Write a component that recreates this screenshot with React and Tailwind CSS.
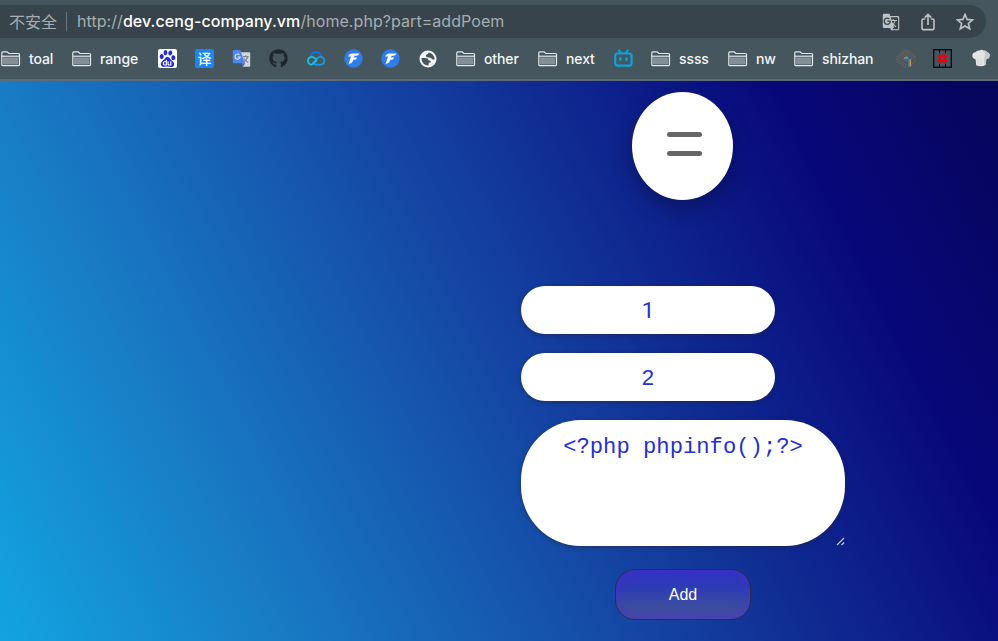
import { FaGithub } from "react-icons/fa";
import { SiBaidu } from "react-icons/si";
import { MdGTranslate } from "react-icons/md";

function Folder() {
  return (
    <svg className="h-[16px] w-[20px] shrink-0" viewBox="0 0 20 16" fill="none" stroke="#e4e7e9" strokeWidth="1.2">
      <path d="M.8 13.6V1.9Q.8.9 1.8.9H6.2l1.6 1.6H17.5q1 0 1 1V13.6q0 1-1 1H1.8q-1 0-1-1Z" />
      <path d="M.8 5.2H18.5" />
      <path d="M2 6.4H17.3V13.4H2Z" fill="#849096" stroke="none" />
    </svg>
  );
}

function Baidu() {
  return (
    <span className="flex h-[19px] w-[19px] items-center justify-center rounded-[2px] bg-white">
      <SiBaidu className="h-[17px] w-[17px] text-[#2529d8]" />
    </span>
  );
}

function Yi() {
  return (
    <span className="flex h-[19px] w-[19px] items-center justify-center rounded-[2px] bg-[#1687f5] font-['Noto_Sans_CJK_SC',sans-serif] text-[14px] leading-[19px] font-medium text-white">
      译
    </span>
  );
}

function GoogleTranslate() {
  return (
    <svg className="h-[19px] w-[19px]" viewBox="0 0 19 19">
      <path d="M8 3.2h9.2q1 0 1 1v12.6q0 1-1 1H11Z" fill="#d3d7da" />
      <path d="M11 7.6h5.6M13.8 6.2v1.4M15.7 7.7Q14.8 11.6 11.4 13M12 9.5q1.5 2.7 4.2 4" fill="none" stroke="#7b8990" strokeWidth="1.1" />
      <path d="M10 14.2h3.2L11 17.8Z" fill="#3563c8" />
      <path d="M1.8 1H8.2L13 14.2H1.8q-1 0-1-1V2q0-1 1-1Z" fill="#4b86ef" />
      <path d="M7.4 5.7A2.6 2.6 0 1 0 8.2 8H5.7" fill="none" stroke="#e6eefb" strokeWidth="1.1" />
    </svg>
  );
}

function Cloud() {
  return (
    <svg className="h-[19px] w-[20px]" viewBox="0 0 20 19" fill="none" strokeWidth="1.8" strokeLinecap="round">
      <path d="M5 7.4a5.1 5.1 0 0 1 10-.2" stroke="#1272ee" />
      <path d="M8.8 15.6h5.9a3.9 3.9 0 1 0-2.4-7.1L6.9 14.2" stroke="#149be9" />
      <path d="M9.6 9.8 7.6 8.3A3.9 3.9 0 1 0 5.2 15.6Q6.6 15.5 7.8 14.4L10.5 11.7" stroke="#13c7d2" />
    </svg>
  );
}

function FMark() {
  return (
    <svg className="h-[19px] w-[19px]" viewBox="0 0 19 19">
      <circle cx="9.5" cy="9.5" r="9.2" fill="#2f7de9" />
      <path d="M4.2 7.4Q5.2 4.4 8.4 4.4H15.4Q14.8 6.6 12.4 6.7H10.6L10 8.5h3.2Q12.6 10.7 10.4 10.8H9.2Q8.4 14.8 4.6 14.8L7 7.4Z" fill="#fff" />
    </svg>
  );
}

function Globe() {
  return (
    <svg className="h-[18px] w-[18px]" viewBox="0 0 18 18">
      <circle cx="9" cy="9" r="7.5" fill="#46565f" stroke="#f4f5f6" strokeWidth="2" />
      <path d="M2 4.5 8.2 1.2 9.6 2.8Q9.4 4.2 7.6 4.4 6.2 5.4 7.2 6.7 8.4 7.8 10 7.4q2.4.2 3 1.6.9.9 3.2.6L15.6 12 10 16.4 9.4 15.8 9.8 12.8 12 12.2Q11.8 10.2 9.4 10.3 9 8.2 6.8 8.1L2 8Z" fill="#f4f5f6" />
    </svg>
  );
}

function Tv() {
  return (
    <svg className="h-[19px] w-[20px]" viewBox="0 0 20 19" fill="none" stroke="#0fa2d9" strokeWidth="2.2" strokeLinecap="round">
      <rect x="1.2" y="4.5" width="16.4" height="12.2" rx="2.6" />
      <path d="M5 1.4 7 4M13.8 1.4 11.8 4M6.3 9.4v1.6M12.5 9.4v1.6" />
      <path d="M4.4 17.4h1M13.6 17.4h1" strokeWidth="1.3" />
    </svg>
  );
}

function Cube() {
  return (
    <svg className="h-[20px] w-[20px]" viewBox="0 0 20 20" fill="none">
      <path d="M1 7 10 1l9 6-8 5.5ZM1 9.5 10.5 16M1 12l9 6.5M3.5 7.3 10 3l6 4.3M6 8l4-2.6L14.5 8" stroke="#6c635d" strokeWidth=".9" />
      <path d="M1 7v5.5M12 18.5l7-5.8V7" stroke="#68615e" strokeWidth=".9" />
      <path d="M8.2 9.8Q9.3 7.6 12.2 8.5" stroke="#d28a47" strokeWidth="1.3" />
      <path d="M9.2 10.2q2-1.4 3.2.3" stroke="#208ec8" strokeWidth="1.8" />
      <path d="M12.7 11v6.8" stroke="#2789b8" strokeWidth="1.2" />
      <path d="M14.3 10.2v7.3" stroke="#df892f" strokeWidth="1.7" />
    </svg>
  );
}

function Grate() {
  return (
    <svg className="h-[19px] w-[19px]" viewBox="0 0 19 19" fill="none">
      <rect x=".7" y=".7" width="17.6" height="17.6" stroke="#080c0e" strokeWidth="1.4" />
      <path d="M6.5 1v17M12.5 1v17" stroke="#080c0e" strokeWidth="1" />
      <path d="M7 4v11M12 4v11M4 7h11M4 12h11" stroke="#e3060f" strokeWidth="2" />
    </svg>
  );
}

function ChefHat() {
  return (
    <svg className="h-[19px] w-[18px]" viewBox="0 0 18 19">
      <path d="M3.6 10.4Q.2 9.6.3 6.6.4 3.6 3.4 3.2 5 .9 7.6 1.5 9.6.2 11.6 1.5 14.2 1 15.2 3.2 17.9 4 17.7 6.8 17.4 9.8 14.3 10.3L13.8 15.8Q9 18.6 4.2 16.2Z" fill="#e3e3e3" />
      <path d="M12.4 2.2q1.4 4-.2 7.4l.2 7 1.4-.8.5-5.5q3.1-.5 3.4-3.5.2-2.8-2.5-3.6Q14.4 1.6 12.4 1.5Z" fill="#c6c7c8" />
      <path d="M6 9.5v6M9 10v6" stroke="#cfd0d0" strokeWidth=".8" />
    </svg>
  );
}

const bookmarks = [
  { label: "toal", cell: "w-[71px]" },
  { label: "range", cell: "w-[86px]" },
  { icon: <Baidu />, cell: "w-[37px]" },
  { icon: <Yi />, cell: "w-[37px]" },
  { icon: <GoogleTranslate />, cell: "w-[37px]" },
  { icon: <FaGithub className="h-[19px] w-[19px] text-[#20272c]" />, cell: "w-[37px]" },
  { icon: <Cloud />, cell: "w-[38px]" },
  { icon: <FMark />, cell: "w-[37px]" },
  { icon: <FMark />, cell: "w-[38px]" },
  { icon: <Globe />, cell: "w-[37px]" },
  { label: "other", cell: "w-[82px]" },
  { label: "next", cell: "w-[76px]" },
  { icon: <Tv />, cell: "w-[37px]" },
  { label: "ssss", cell: "w-[77px]" },
  { label: "nw", cell: "w-[66px]" },
  { label: "shizhan", cell: "w-[102px]" },
  { icon: <Cube />, cell: "w-[37px]" },
  { icon: <Grate />, cell: "w-[39px]" },
  { icon: <ChefHat />, cell: "w-[18px]" },
];

function AddressBar() {
  return (
    <div className="flex h-[33px] w-[986px] items-center rounded-r-full bg-[#38444b] pl-[9px] text-[#a6adb1]">
      <span className="w-[57px] pb-[2px] font-['Noto_Sans_CJK_SC',sans-serif] text-[16px] leading-[30px] whitespace-nowrap">不安全</span>
      <span className="h-[19px] w-px bg-[#69757b]" />
      <span className="ml-[10px] pb-[2px] text-[16px] leading-[30px] tracking-[0.06px] whitespace-nowrap">
        http://<span className="font-medium text-white">dev.ceng-company.vm</span>/home.php?part=addPoem
      </span>
      <div className="mr-[12px] ml-auto flex items-center text-[#bdc2c5]">
        <MdGTranslate className="h-[18px] w-[18px]" />
        <svg className="ml-[21px] h-[18px] w-[14px]" viewBox="0 0 14 18" fill="none" stroke="currentColor" strokeWidth="1.6">
          <path d="M4.2 6H2.4Q1 6 1 7.4v7.8q0 1.4 1.4 1.4h9.2q1.4 0 1.4-1.4V7.4Q13 6 11.6 6H9.8M7 12V1.6M3.7 4.6 7 1.3l3.3 3.3" />
        </svg>
        <svg className="ml-[21px] h-[18px] w-[18px]" viewBox="0 0 18 18" fill="none" stroke="currentColor" strokeWidth="1.6">
          <path d="M9 1.4l2.1 5 5.4.5-4.1 3.6 1.3 5.3L9 13 4.3 15.8l1.3-5.3L1.5 6.9l5.4-.5Z" />
        </svg>
      </div>
    </div>
  );
}

export default function App() {
  return (
    <div className="flex h-[641px] w-[998px] flex-col overflow-hidden bg-[#46565f] font-['Inter','Liberation_Sans',sans-serif]">
      <header className="h-[81px] shrink-0 border-b-2 border-[#5c6b76] pt-[5px]">
        <AddressBar />
        <nav className="flex h-[41px] items-center pl-px">
          {bookmarks.map((item, i) => (
            <div key={i} className={`flex shrink-0 items-center ${item.cell}`}>
              {item.icon || (
                <>
                  <Folder />
                  <span className="ml-[8px] text-[14px] leading-[20px] font-medium tracking-[-0.1px] whitespace-nowrap text-[#f3f5f6]">{item.label}</span>
                </>
              )}
            </div>
          ))}
        </nav>
      </header>
      <main className="flex-1 bg-[linear-gradient(63.2deg,#12a4e1_0%,#187cc5_21.9%,#1442a2_52%,#08077a_82.5%,#050559_100%)] pt-[11px] pl-[521px]">
        <div className="ml-[111px] flex h-[108px] w-[101px] flex-col items-center gap-[14.5px] rounded-[50%] bg-white pt-[39.7px] pl-[3px] shadow-[0_8px_20px_rgba(0,0,0,0.28)]">
          <span className="h-[5px] w-[35px] rounded-full bg-[#666]" />
          <span className="h-[5px] w-[35px] rounded-full bg-[#666]" />
        </div>
        <form className="mt-[86px] flex flex-col font-['Liberation_Sans',sans-serif] text-[22.2px] text-[#2430cf]">
          <div className="flex h-[48.4px] w-[254px] items-center justify-center rounded-[25px] bg-white pt-px font-['Roboto',sans-serif] text-[22.5px] shadow-[0_1px_4px_rgba(35,35,50,0.6)]">1</div>
          <div className="mt-[18.6px] flex h-[48.4px] w-[254px] items-center justify-center rounded-[25px] bg-white shadow-[0_1px_4px_rgba(35,35,50,0.6)]">2</div>
          <div className="relative mt-[18.6px] h-[126.3px] w-[324px] rounded-[60px] bg-white pt-[15px] text-center font-['Liberation_Mono',monospace] leading-[26px] whitespace-nowrap shadow-[0_1px_4px_rgba(35,35,50,0.6)]">
            {"<?php phpinfo();?>"}
            <svg className="absolute right-0 bottom-0 h-[10px] w-[10px]" viewBox="0 0 10 10" fill="none">
              <path d="M1 8 8 1M5.5 8.2 8 5.7" stroke="#202020" strokeWidth="1" />
              <path d="M2 9 9 2M6.5 9 9 6.5" stroke="#c9cbd2" strokeWidth="1.2" />
            </svg>
          </div>
          <button type="button" className="mt-[22.7px] ml-[94px] h-[51px] w-[136px] rounded-[20px] border border-[#232f50] bg-[linear-gradient(180deg,#3232c3_0%,#2d3bb5_35%,#3b4c9f_75%,#484ba5_100%)] pt-[2px] text-[16px] text-white shadow-[inset_0_0_10px_rgba(80,45,210,0.65)]">
            Add
          </button>
        </form>
      </main>
    </div>
  );
}
